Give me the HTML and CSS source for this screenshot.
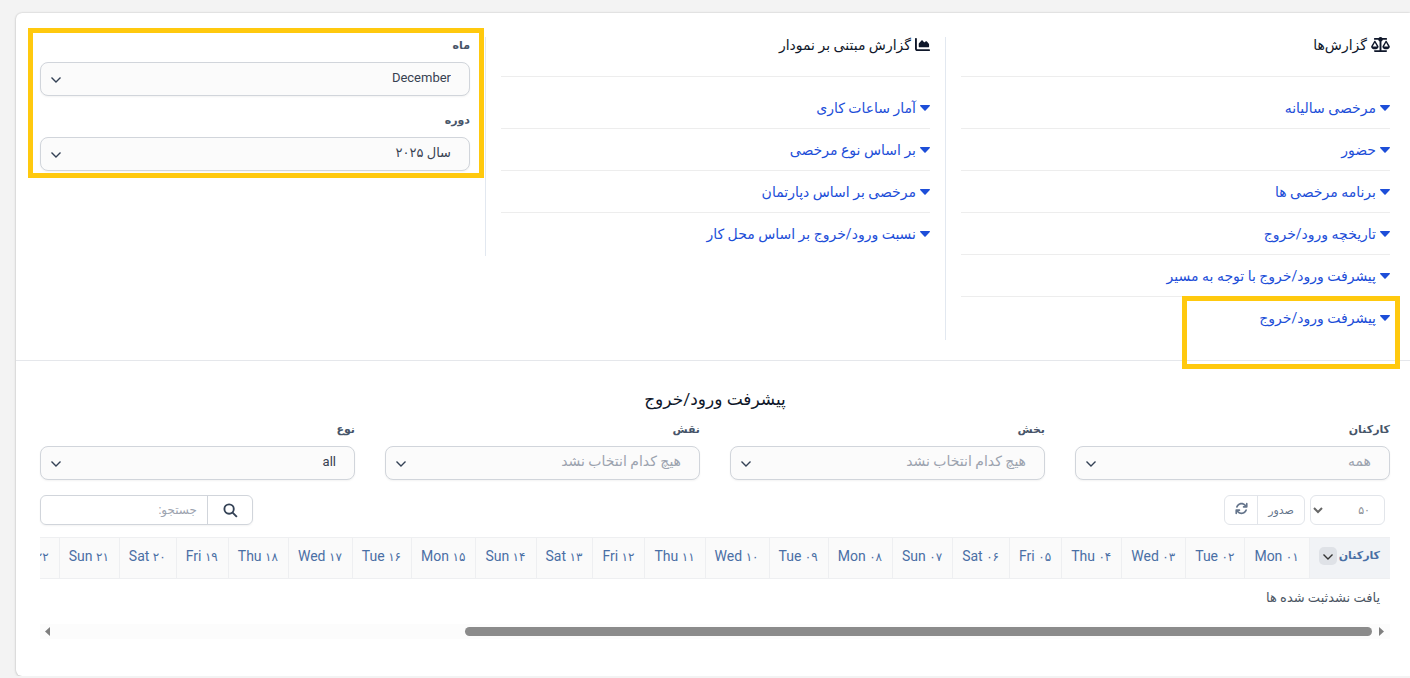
FILE: index.html
```html
<!DOCTYPE html>
<html lang="fa" dir="rtl">
<head>
  <meta charset="UTF-8" />
  <title>گزارش‌ها</title>
  <link rel="stylesheet" href="styles.css">
</head>
<body>

<svg class="sprite" aria-hidden="true">
  <symbol id="caret" viewBox="0 0 10 6"><path d="M.6 0h8.800q.9.100.400.900L5.600 5.500q-.6.600-1.200 0L.2.900Q-.3.100.6 0z"/></symbol>
  <symbol id="chevron" viewBox="0 0 12 8"><path d="M1.500 1.500L6 6l4.500-4.500" fill="none" stroke="currentColor" stroke-width="1.400"/></symbol>
</svg>

<main class="card">
  <section class="reports">
    <div class="col col-line">
      <h2 class="col-title">
        <svg class="icon-scale" viewBox="0 0 640 512"><path d="M384 32H512c17.700 0 32 14.300 32 32s-14.300 32-32 32H398.400c-5.200 25.800-22.900 47.100-46.400 57.300V448H512c17.700 0 32 14.300 32 32s-14.300 32-32 32H128c-17.700 0-32-14.300-32-32s14.300-32 32-32H288V153.300c-23.500-10.300-41.200-31.600-46.400-57.300H128c-17.700 0-32-14.300-32-32s14.300-32 32-32H256c14.600-19.400 37.800-32 64-32s49.400 12.600 64 32zm55.600 288H584.400L512 195.800 439.600 320zM512 416c-62.900 0-115.200-34-126-78.900-2.600-11 1-22.300 6.700-32.100l95.200-163.200c5-8.600 14.200-13.800 24.100-13.800s19.100 5.300 24.100 13.800l95.200 163.200c5.700 9.800 9.300 21.100 6.700 32.100C627.200 382 574.900 416 512 416zM126.800 195.800L54.400 320H199.300L126.800 195.800zM.9 337.100c-2.600-11 1-22.300 6.700-32.100l95.200-163.200c5-8.600 14.200-13.800 24.100-13.800s19.100 5.300 24.100 13.800l95.200 163.200c5.700 9.800 9.300 21.100 6.700 32.100C242 382 189.700 416 126.800 416S11.700 382 .9 337.100z"/></svg>
        گزارش‌ها
      </h2>
      <ul class="links">
        <li><a href="#"><svg class="caret"><use href="#caret"/></svg>مرخصی سالیانه</a></li>
        <li><a href="#"><svg class="caret"><use href="#caret"/></svg>حضور</a></li>
        <li><a href="#"><svg class="caret"><use href="#caret"/></svg>برنامه مرخصی ها</a></li>
        <li><a href="#"><svg class="caret"><use href="#caret"/></svg>تاریخچه ورود/خروج</a></li>
        <li><a href="#"><svg class="caret"><use href="#caret"/></svg>پیشرفت ورود/خروج با توجه به مسیر</a></li>
        <li class="marked"><a href="#"><svg class="caret"><use href="#caret"/></svg>پیشرفت ورود/خروج</a></li>
      </ul>
    </div>

    <div class="col col-line">
      <h2 class="col-title">
        <svg class="icon-area" viewBox="0 0 512 512"><path d="M64 64c0-17.700-14.300-32-32-32S0 46.300 0 64V400c0 44.200 35.800 80 80 80H480c17.700 0 32-14.300 32-32s-14.300-32-32-32H80c-8.800 0-16-7.200-16-16V64zm96 288H448c17.700 0 32-14.300 32-32V251.800c0-7.600-2.700-15-7.700-20.800l-65.800-76.800c-12.100-14.200-33.700-15-46.900-1.800l-21 21c-10 10-26.400 9.200-35.400-1.600l-39.200-47c-12.600-15.100-35.700-15.400-48.700-.6L135.900 215c-5.100 5.800-7.900 13.300-7.900 21.100v84c0 17.700 14.300 32 32 32z"/></svg>
        گزارش مبتنی بر نمودار
      </h2>
      <ul class="links">
        <li><a href="#"><svg class="caret"><use href="#caret"/></svg>آمار ساعات کاری</a></li>
        <li><a href="#"><svg class="caret"><use href="#caret"/></svg>بر اساس نوع مرخصی</a></li>
        <li><a href="#"><svg class="caret"><use href="#caret"/></svg>مرخصی بر اساس دپارتمان</a></li>
        <li><a href="#"><svg class="caret"><use href="#caret"/></svg>نسبت ورود/خروج بر اساس محل کار</a></li>
      </ul>
    </div>

    <div class="col">
      <div class="period">
        <div class="field">
          <label for="month">ماه</label>
          <div class="select">
            <select id="month"><option>December</option></select>
            <svg class="chevron"><use href="#chevron"/></svg>
          </div>
        </div>
        <div class="field">
          <label for="year">دوره</label>
          <div class="select">
            <select id="year"><option>سال ۲۰۲۵</option></select>
            <svg class="chevron"><use href="#chevron"/></svg>
          </div>
        </div>
      </div>
    </div>
  </section>

  <section class="result">
    <h3 class="result-title">پیشرفت ورود/خروج</h3>

    <div class="filters">
      <div class="field">
        <label for="staff">کارکنان</label>
        <div class="select">
          <select id="staff" class="empty"><option>همه</option></select>
          <svg class="chevron"><use href="#chevron"/></svg>
        </div>
      </div>
      <div class="field">
        <label for="department">بخش</label>
        <div class="select">
          <select id="department" class="empty"><option>هیچ کدام انتخاب نشد</option></select>
          <svg class="chevron"><use href="#chevron"/></svg>
        </div>
      </div>
      <div class="field">
        <label for="role">نقش</label>
        <div class="select">
          <select id="role" class="empty"><option>هیچ کدام انتخاب نشد</option></select>
          <svg class="chevron"><use href="#chevron"/></svg>
        </div>
      </div>
      <div class="field">
        <label for="type">نوع</label>
        <div class="select">
          <select id="type"><option>all</option></select>
          <svg class="chevron"><use href="#chevron"/></svg>
        </div>
      </div>
    </div>

    <div class="toolbar">
      <div class="page-size">
        <select aria-label="تعداد"><option>۵۰</option></select>
        <svg class="chevron-bold" viewBox="0 0 10 7"><path d="M1 1l4 4 4-4" fill="none" stroke="currentColor" stroke-width="2"/></svg>
      </div>
      <div class="btn-group">
        <button type="button">صدور</button>
        <button type="button" class="reload" aria-label="بارگذاری">
          <svg viewBox="0 0 512 512"><path d="M105.100 202.600c7.700-21.800 20.200-42.300 37.800-59.800 62.500-62.500 163.800-62.500 226.300 0L386.300 160H336c-17.700 0-32 14.300-32 32s14.300 32 32 32H463.500c17.700 0 32-14.300 32-32V64c0-17.700-14.300-32-32-32s-32 14.300-32 32v51.200L414.400 97.600c-87.500-87.500-229.300-87.500-316.800 0C73.200 122 55.600 150.700 44.800 181.400c-5.900 16.700 2.900 34.900 19.500 40.800s34.900-2.900 40.800-19.500zM39 289.300c-15 4.500-23 17-23 30.700V448c0 17.700 14.300 32 32 32s32-14.300 32-32V396.900l17.600 17.500c87.500 87.400 229.300 87.400 316.700 0 24.400-24.400 42.100-53.100 52.900-83.700 5.900-16.700-2.900-34.900-19.500-40.800s-34.900 2.900-40.800 19.500c-7.700 21.800-20.200 42.300-37.800 59.800-62.500 62.500-163.800 62.500-226.300 0L125.600 352H176c17.700 0 32-14.300 32-32s-14.300-32-32-32H48.400c-3 0-6 .3-9.400 1.300z"/></svg>
        </button>
      </div>
      <div class="search">
        <button type="button" aria-label="جستجو">
          <svg viewBox="0 0 16 16"><circle cx="6.500" cy="6.500" r="5"/><path d="M10.200 10.200l4.600 4.600"/></svg>
        </button>
        <input type="text" aria-label="جستجو" placeholder="جستجو:">
      </div>
    </div>

    <div class="table-wrap">
      <table>
        <thead>
          <tr>
            <th class="staff"><span>کارکنان</span><button type="button" aria-label="مرتب‌سازی"><svg class="chevron-sm"><use href="#chevron"/></svg></button></th>
            <th>Mon <i>۰۱</i></th>
            <th>Tue <i>۰۲</i></th>
            <th>Wed <i>۰۳</i></th>
            <th>Thu <i>۰۴</i></th>
            <th>Fri <i>۰۵</i></th>
            <th>Sat <i>۰۶</i></th>
            <th>Sun <i>۰۷</i></th>
            <th>Mon <i>۰۸</i></th>
            <th>Tue <i>۰۹</i></th>
            <th>Wed <i>۱۰</i></th>
            <th>Thu <i>۱۱</i></th>
            <th>Fri <i>۱۲</i></th>
            <th>Sat <i>۱۳</i></th>
            <th>Sun <i>۱۴</i></th>
            <th>Mon <i>۱۵</i></th>
            <th>Tue <i>۱۶</i></th>
            <th>Wed <i>۱۷</i></th>
            <th>Thu <i>۱۸</i></th>
            <th>Fri <i>۱۹</i></th>
            <th>Sat <i>۲۰</i></th>
            <th>Sun <i>۲۱</i></th>
            <th>Mon <i>۲۲</i></th>
          </tr>
        </thead>
        <tbody>
          <tr><td colspan="23">یافت نشدثبت شده ها</td></tr>
        </tbody>
      </table>
    </div>

    <div class="scrollbar">
      <svg viewBox="0 0 5 9"><path d="M0 0l5 4.500L0 9z"/></svg>
      <div class="track"><div class="thumb"></div></div>
      <svg viewBox="0 0 5 9"><path d="M5 0L0 4.500 5 9z"/></svg>
    </div>
  </section>
</main>

</body>
</html>
```
FILE: styles.css
```css
*, *::after {
  box-sizing: border-box;
}

body {
  margin: 0;
  padding: 13px 0 0 16px;
  background: #f3f3f3;
  color: #0f172a;
  font-family: Roboto, "DejaVu Sans", sans-serif;
  font-size: 14px;
  overflow: hidden;
}

h2, h3, ul {
  margin: 0;
  padding: 0;
  font-weight: normal;
}

button, select, input {
  font-family: inherit;
  margin: 0;
}

.sprite {
  display: none;
}

.card {
  background: #fff;
  border-radius: 6px 0 0 6px;
  box-shadow: 0 0 2px rgba(0,0,0,0.2), 0 1px 3px rgba(0,0,0,0.12);
}

/* reports */

.reports {
  display: grid;
  grid-template-columns: repeat(3, 1fr);
  align-items: start;
  padding: 24px 5px 20px 9px;
  border-bottom: 1px solid #e5e7eb;
}

.col {
  padding: 0 15px;
}

.col-line {
  border-left: 1px solid #e2e8f0;
}

.col-title {
  display: flex;
  align-items: center;
  gap: 4px;
  height: 40px;
  padding-bottom: 24px;
  border-bottom: 1px solid #ededed;
  margin-bottom: 10px;
  font-size: 14px;
  line-height: 16px;
}

.icon-scale {
  width: 19px;
  height: 15px;
  fill: #0f172a;
}

.icon-area {
  width: 15px;
  height: 15px;
  fill: #0f172a;
}

.links {
  list-style: none;
  padding-bottom: 2px;
}

.links li {
  border-bottom: 1px solid #ededed;
}

.links li:last-child {
  border-bottom: none;
}

.links a {
  display: flex;
  align-items: center;
  gap: 4px;
  height: 41px;
  color: #1d4ed8;
  text-decoration: none;
}

.caret {
  width: 10px;
  height: 6px;
  fill: #1d4ed8;
}

/* highlight frames */

.marked, .period {
  position: relative;
}

.marked::after, .period::after {
  content: "";
  position: absolute;
  border: 5px solid #ffc90e;
  pointer-events: none;
}

.marked::after {
  top: -1px;
  right: -10px;
  width: 218px;
  height: 73px;
}

.period::after {
  inset: -9px -14px -7px -12px;
}

/* fields */

.field {
  display: flex;
  flex-direction: column;
  gap: 8px;
}

.field label {
  color: #475569;
  font-size: 11px;
  font-weight: bold;
  line-height: 17px;
}

.period {
  display: flex;
  flex-direction: column;
  gap: 16px;
}

.select, .page-size {
  position: relative;
}

.select select {
  display: block;
  width: 100%;
  height: 34px;
  padding: 0 18px 4px 40px;
  appearance: none;
  background: #fbfbfb;
  border: 1px solid #d1d5db;
  border-radius: 8px;
  box-shadow: 0 1px 2px rgba(0,0,0,0.05);
  color: #374151;
  font-size: 13px;
}

.select select.empty {
  color: #9ca3af;
  font-size: 14px;
}

.chevron {
  position: absolute;
  left: 10px;
  top: 14px;
  width: 12px;
  height: 8px;
  color: #334155;
  pointer-events: none;
}

/* result */

.result {
  padding: 24px 20px 37px 24px;
}

.result-title {
  font-size: 17px;
  line-height: 28px;
  text-align: center;
  margin-bottom: 8px;
}

.filters {
  display: grid;
  grid-template-columns: repeat(4, 1fr);
  gap: 30px;
  margin-bottom: 15px;
}

.toolbar {
  display: flex;
  gap: 5px;
  padding-right: 5px;
  margin-bottom: 12px;
}

.page-size select {
  display: block;
  width: 75px;
  height: 30px;
  padding: 0 14px;
  appearance: none;
  background: #fff;
  border: 1px solid #e2e5ea;
  border-radius: 6px;
  color: #8b8f96;
  font-size: 11px;
}

.chevron-bold {
  position: absolute;
  left: 3px;
  top: 12px;
  width: 10px;
  height: 7px;
  color: #666;
  pointer-events: none;
}

.btn-group {
  display: flex;
  border: 1px solid #e2e5ea;
  border-radius: 6px;
}

.btn-group button {
  width: 46px;
  height: 28px;
  padding: 0;
  background: none;
  border: none;
  color: #64748b;
  font-size: 11px;
}

.btn-group .reload {
  width: 33px;
  border-right: 1px solid #e2e5ea;
}

.reload svg {
  width: 13px;
  height: 13px;
  fill: #64748b;
}

.search {
  display: flex;
  margin-right: auto;
  border: 1px solid #d1d5db;
  border-radius: 6px;
  box-shadow: 0 1px 2px rgba(0,0,0,0.05);
}

.search button {
  width: 44px;
  height: 28px;
  padding: 0;
  background: none;
  border: none;
}

.search svg {
  width: 15px;
  height: 15px;
  fill: none;
  stroke: #334155;
  stroke-width: 2;
  vertical-align: middle;
}

.search input {
  width: 167px;
  height: 28px;
  padding: 0 10px;
  background: none;
  border: none;
  border-right: 1px solid #d1d5db;
  font-size: 12px;
}

.search input::placeholder {
  color: #9ca3af;
}

/* table */

.table-wrap {
  overflow: hidden;
}

table {
  border-collapse: collapse;
  white-space: nowrap;
}

th {
  height: 41px;
  padding: 0 10px 4px 9px;
  background: #fafafa;
  border: 1px solid #eeeff1;
  border-right: none;
  color: #4a6fa5;
  font-size: 14px;
  font-weight: normal;
}

th i {
  font-size: 12px;
  font-style: normal;
}

th.staff {
  background: #f1f3f6;
  font-size: 11px;
  font-weight: bold;
}

th.staff button {
  width: 18px;
  height: 18px;
  margin-right: 2px;
  padding: 0;
  background: #dfe2e7;
  border: none;
  border-radius: 5px;
  vertical-align: middle;
}

.chevron-sm {
  display: block;
  width: 12px;
  height: 8px;
  margin: 2px auto 0;
  color: #333;
}

td {
  height: 37px;
  padding: 0 10px;
  color: #4b5563;
  font-size: 13px;
}

.scrollbar {
  display: flex;
  align-items: center;
  gap: 7px;
  height: 15px;
  margin-top: 8px;
  padding: 0 6px 0 5px;
  background: #fcfcfc;
}

.scrollbar svg {
  width: 5px;
  height: 9px;
  fill: #7f7f7f;
}

.track {
  flex: 1;
}

.thumb {
  width: 69%;
  height: 9px;
  background: #8b8b8b;
  border-radius: 5px;
}
```
